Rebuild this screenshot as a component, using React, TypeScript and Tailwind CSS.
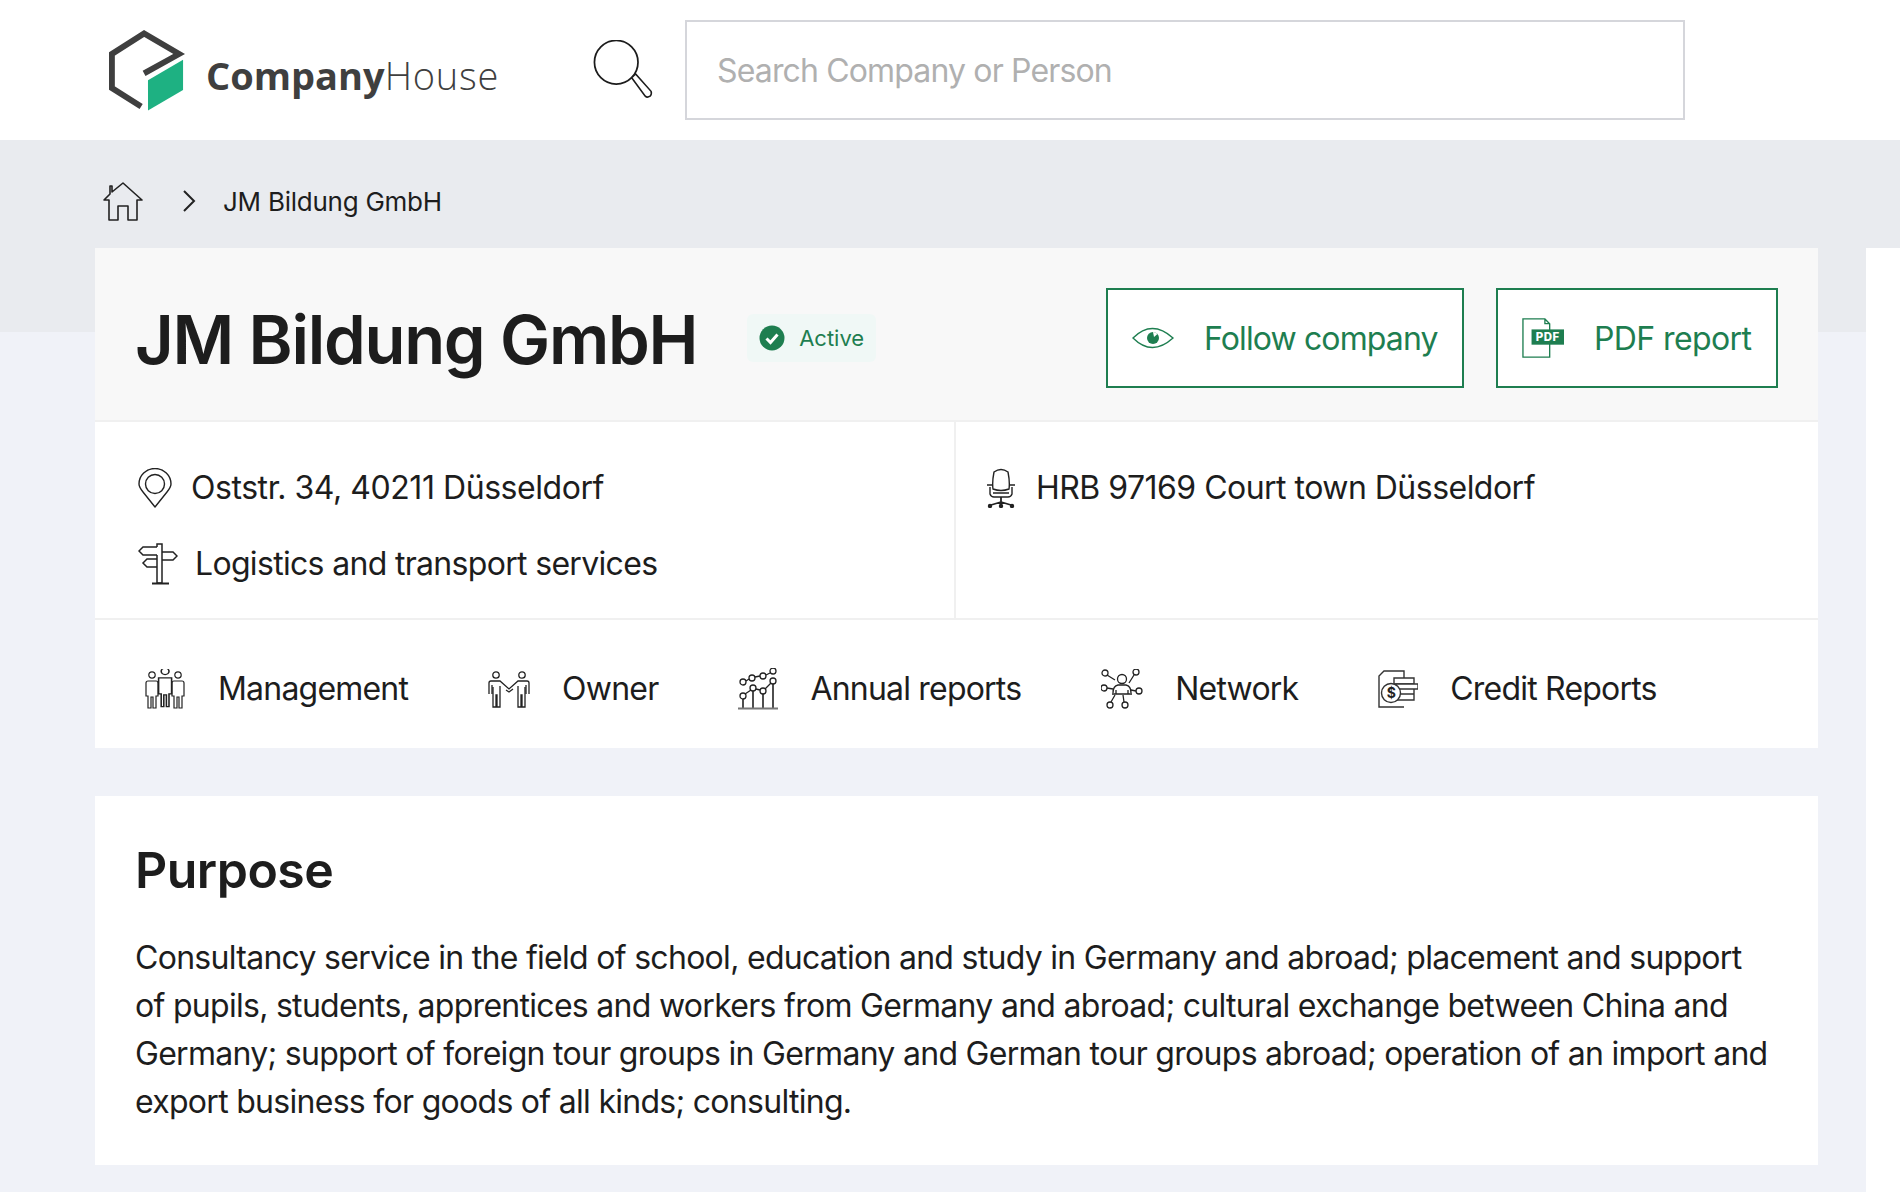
import React from "react";

const Logo = () => (
  <svg width="76" height="81" viewBox="0 0 78 82" className="shrink-0">
    <path d="M33 78 L3 59 V24 L36 3 L72 24 L36 44" fill="none" stroke="#3f3f3f" strokeWidth="6" />
    <path d="M40 82 V51 L76 30 V61 Z" fill="#1eb182" />
  </svg>
);

const SearchIcon = () => (
  <svg width="60" height="60" viewBox="0 0 62 62" fill="none" stroke="#1c1c1c" className="shrink-0">
    <circle cx="24" cy="23" r="22.5" strokeWidth="1.8" />
    <path d="M40 39 L44 35 L60 53 Q61 56 59 58 Q56 60 54 58 Z" strokeWidth="1.6" fill="#fff" />
  </svg>
);

const HomeIcon = () => (
  <svg width="40" height="40" viewBox="0 0 40 40" fill="none" stroke="#222" strokeWidth="1.6" className="mt-[2px] shrink-0">
    <path d="M1 18 L7 12 V4 H9 V10 L20 1 L39 18 H34 V38 H25 V24 H15 V38 H6 V18 Z" strokeLinejoin="round" />
  </svg>
);

const Chevron = () => (
  <svg width="14" height="22" viewBox="0 0 14 22" fill="none" stroke="#222" strokeWidth="2" className="shrink-0">
    <path d="M2 1 L12 11 L2 21" />
  </svg>
);

const EyeIcon = () => (
  <svg width="42" height="26" viewBox="0 0 42 26" fill="none" stroke="#1e7e50" className="shrink-0">
    <path d="M1 13 Q20 -6 41 13 Q20 32 1 13 Z" strokeWidth="1.4" />
    <circle cx="21" cy="13" r="6" fill="#1e7e50" stroke="none" />
    <path d="M21 7 A6 6 0 0 1 25.5 9 L22 12 Z" fill="#fff" stroke="none" />
  </svg>
);

const PdfIcon = () => (
  <svg width="42" height="42" viewBox="0 0 44 42" fill="none" className="shrink-0">
    <path d="M1 1 H24 L29 6 V41 H1 Z M24 1 V6 H29" stroke="#1e7e50" strokeWidth="1.4" fill="#fff" />
    <rect x="10" y="12" width="34" height="16" fill="#1e7e50" />
    <text x="27" y="24.5" textAnchor="middle" fontSize="12" fontWeight="800" fill="#fff" fontFamily="Inter, sans-serif" letterSpacing="0.5">PDF</text>
  </svg>
);

const CheckCircle = () => (
  <svg width="26" height="26" viewBox="0 0 26 26" className="shrink-0">
    <circle cx="13" cy="13" r="12.5" fill="#1e7e50" />
    <path d="M7.5 13.5 L11.5 17.5 L18.5 9.5" fill="none" stroke="#fff" strokeWidth="3" />
  </svg>
);

const PinIcon = () => (
  <svg width="34" height="40" viewBox="0 0 34 40" fill="none" stroke="#222" strokeWidth="1.4" className="shrink-0">
    <path d="M17 39 L5 24 Q1 19 1 16 A16 15.5 0 0 1 33 16 Q33 19 29 24 Z" strokeLinejoin="round" />
    <circle cx="17" cy="16" r="9.5" />
  </svg>
);

const SignIcon = () => (
  <svg width="40" height="42" viewBox="0 0 40 42" fill="none" stroke="#222" strokeWidth="1.5" className="shrink-0">
    <path d="M19 12 V40 H24 V1 H19 V4 M24 1" />
    <path d="M19 4 H5 L1 8 L5 12 H19" />
    <path d="M24 9 H35 L39 13 L35 17 H24" />
    <path d="M19 16 H9 L5 20 L9 24 H19" />
    <path d="M14 40.5 H31" strokeWidth="2" />
  </svg>
);

const ChairIcon = () => (
  <svg width="30" height="40" viewBox="0 0 30 40" fill="none" stroke="#222" strokeWidth="1.4" className="shrink-0">
    <path d="M8 4 Q15 -1 22 4 Q24 14 23 21 Q15 24 7 21 Q6 14 8 4 Z" />
    <path d="M4 19 V26 Q5 29 8 29 H22 Q25 29 26 26 V19" />
    <path d="M1 17 H6 M24 17 H29 M7 25 H23" />
    <path d="M15 29 V34 M15 34 L5 37 M15 34 V37 M15 34 L25 37" strokeWidth="1.8" />
    <circle cx="4" cy="38" r="1.5" fill="#222" />
    <circle cx="15" cy="38" r="1.5" fill="#222" />
    <circle cx="26" cy="38" r="1.5" fill="#222" />
  </svg>
);

const Person = ({ x, y = 0 }: { x: number; y?: number }) => (
  <g transform={`translate(${x} ${y})`}>
    <circle cx="7" cy="5" r="3.2" />
    <path d="M3 11 H11 Q13 11 13 13 V26 H11 V38 H8 V27 H6 V38 H3 V26 H1 V13 Q1 11 3 11 Z" />
  </g>
);

const ManagementIcon = () => (
  <svg width="42" height="40" viewBox="0 0 42 40" fill="#fff" stroke="#222" strokeWidth="1.2" className="shrink-0">
    <Person x={1} y={1} />
    <Person x={27} y={1} />
    <g transform="translate(12 -3) scale(1.3 1.07)">
      <circle cx="7" cy="5" r="3" />
      <path d="M2 11 H12 V26 H10 V38 H8 V27 H6 V38 H4 V26 H2 Z" />
    </g>
  </svg>
);

const OwnerIcon = () => (
  <svg width="42" height="38" viewBox="0 0 42 38" fill="none" stroke="#222" strokeWidth="1.3" className="shrink-0">
    <circle cx="8" cy="5" r="3.2" />
    <circle cx="34" cy="5" r="3.2" />
    <path d="M1 24 V13 Q1 11 3 11 H12 L21 19 L30 11 H39 Q41 11 41 13 V24" />
    <path d="M4 15 V24 M38 15 V24" />
    <path d="M5 17 V37 H8 V25 H9 V37 H12 V16" />
    <path d="M37 17 V37 H34 V25 H33 V37 H30 V16" />
    <path d="M18 20 L21 22 L25 19" />
  </svg>
);

const ChartIcon = () => (
  <svg width="40" height="42" viewBox="0 0 40 42" fill="none" stroke="#222" strokeWidth="1.3" className="shrink-0">
    <circle cx="5" cy="28" r="3" />
    <circle cx="15" cy="20" r="3" />
    <circle cx="25" cy="23" r="3" />
    <circle cx="35" cy="13" r="3" />
    <circle cx="5" cy="14" r="3" />
    <circle cx="14" cy="10" r="3" />
    <circle cx="25" cy="8" r="3" />
    <circle cx="35" cy="3" r="3" />
    <path d="M7 26 L13 22 M18 21 L22 22 M27 21 L33 15 M8 13 L11 11 M17 9 L22 8 M28 7 L32 5" />
    <path d="M5 31 V40 M15 23 V40 M25 26 V40 M35 16 V40" strokeWidth="1.6" />
    <path d="M0 40.5 H40" stroke="#777" strokeWidth="2" />
  </svg>
);

const NetworkIcon = () => (
  <svg width="42" height="40" viewBox="0 0 42 40" fill="none" stroke="#222" strokeWidth="1.3" className="shrink-0">
    <circle cx="21" cy="10" r="4.5" />
    <path d="M12 24 Q12 17 17 16 H25 Q30 17 30 24 M11 25 H31 M15 25 V21 M27 25 V21" />
    <circle cx="4" cy="4" r="3" />
    <circle cx="35" cy="3" r="3" />
    <circle cx="3" cy="19" r="3" />
    <circle cx="38" cy="22" r="3" />
    <circle cx="9" cy="36" r="3" />
    <circle cx="24" cy="36" r="3" />
    <path d="M6 6 L14 11 M33 6 L28 14 M6 19 L12 20 M35 22 L30 21 M10 33 L14 26 M23 33 L22 26" />
  </svg>
);

const CreditIcon = () => (
  <svg width="40" height="38" viewBox="0 0 40 38" fill="none" stroke="#333" strokeWidth="1.4" className="shrink-0">
    <path d="M26 37 H1 V6 L6 1 H26 V8" />
    <path d="M16 8 H36 V14 H16 Z" fill="#fff" />
    <path d="M18 14 H40 V19 H18 Z M18 19 H36 V24 H18 Z M18 24 H36 V30 H18 Z" fill="#fff" />
    <circle cx="13" cy="23" r="9.5" fill="#fff" />
    <text x="13" y="28" textAnchor="middle" fontSize="14" fontWeight="700" fill="#222" stroke="none" fontFamily="Inter, sans-serif">$</text>
  </svg>
);

const navItems = [
  { label: "Management", icon: <ManagementIcon /> },
  { label: "Owner", icon: <OwnerIcon /> },
  { label: "Annual reports", icon: <ChartIcon /> },
  { label: "Network", icon: <NetworkIcon /> },
  { label: "Credit Reports", icon: <CreditIcon /> },
];

const App = () => {
  return (
    <div className="relative h-[1192px] overflow-hidden bg-white font-['Inter',sans-serif] text-[#1d1d1d]">
      <header className="flex h-[140px] items-center pl-[109px]">
        <div className="flex w-[484px] items-center gap-[21px]">
          <Logo />
          <div className="mt-[9px] font-['Open_Sans',sans-serif] text-[38px] leading-none text-[#3f3f3f]">
            <span className="font-bold">Company</span>
            <span className="font-light tracking-[0.8px]">House</span>
          </div>
        </div>
        <SearchIcon />
        <div className="ml-[32px] flex h-[100px] w-[1000px] items-center border-2 border-[#d5d6db] px-[30px] pt-[2px] text-[32px] tracking-[-0.85px] text-[#b0b0b0]">
          Search Company or Person
        </div>
      </header>

      <main className="h-[1052px] bg-[linear-gradient(#e9ebef_192px,#f0f2f8_192px)]">
        <nav className="flex h-[108px] items-center pl-[103px] pt-[14px] text-[26px] tracking-[-0.25px]">
          <HomeIcon />
          <span className="ml-[39px]">
            <Chevron />
          </span>
          <span className="ml-[27px]">JM Bildung GmbH</span>
        </nav>

        <section className="ml-[95px] w-[1723px] bg-white">
          <div className="flex h-[174px] items-center border-b-2 border-[#f0f0f0] bg-[#f8f8f8] px-[40px] pt-[7px]">
            <h1 className="mt-[3px] text-[67px] font-semibold leading-none tracking-[-1.3px]">JM Bildung GmbH</h1>
            <div className="ml-[50px] flex h-[48px] items-center gap-[14px] rounded-md bg-[#f0f8f6] px-[12px] pt-[1px] text-[22px] text-[#1e7e50]">
              <CheckCircle />
              Active
            </div>
            <button className="ml-auto flex h-[100px] w-[358px] items-center gap-[30px] border-2 border-[#1e7e50] bg-white pl-[24px] text-[32px] tracking-[-0.88px] text-[#1e7e50]">
              <EyeIcon />
              <span className="pt-[2px]">Follow company</span>
            </button>
            <button className="ml-[32px] flex h-[100px] w-[282px] items-center gap-[30px] border-2 border-[#1e7e50] bg-white pl-[24px] text-[32px] tracking-[-0.6px] text-[#1e7e50]">
              <PdfIcon />
              <span className="pt-[2px]">PDF report</span>
            </button>
          </div>

          <div className="flex h-[198px] border-b-2 border-[#f0f0f0] text-[32px] tracking-[-0.45px]">
            <div className="flex w-[861px] flex-col gap-[36px] border-r-2 border-[#f0f0f0] pl-[43px] pt-[46px]">
              <div className="flex h-[40px] items-center gap-[19px]">
                <PinIcon />
                Oststr. 34, 40211 Düsseldorf
              </div>
              <div className="flex h-[40px] items-center gap-[17px] tracking-[-0.68px]">
                <SignIcon />
                Logistics and transport services
              </div>
            </div>
            <div className="mt-[46px] flex h-[40px] items-center gap-[20px] pl-[30px] tracking-[-0.52px]">
              <ChairIcon />
              HRB 97169 Court town Düsseldorf
            </div>
          </div>

          <div className="flex h-[128px] items-center gap-[80px] pl-[49px] pt-[10px] text-[32px] tracking-[-0.8px]">
            {navItems.map((item) => (
              <div key={item.label} className="flex items-center gap-[32px]">
                {item.icon}
                {item.label}
              </div>
            ))}
          </div>
        </section>

        <section className="ml-[95px] mt-[48px] h-[369px] w-[1723px] bg-white px-[40px] pt-[44px]">
          <h2 className="text-[50px] font-semibold leading-[60px] tracking-[-0.5px]">Purpose</h2>
          <p className="mt-[34px] text-[32px] leading-[48px] tracking-[-0.71px]">
            Consultancy service in the field of school, education and study in Germany and abroad; placement and support of pupils, students, apprentices and workers from Germany and abroad; cultural exchange between China and Germany; support of foreign tour groups in Germany and German tour groups abroad; operation of an import and export business for goods of all kinds; consulting.
          </p>
        </section>
      </main>

      <div className="absolute bottom-0 right-0 top-[248px] w-[34px] bg-white" />
    </div>
  );
};

export default App;
